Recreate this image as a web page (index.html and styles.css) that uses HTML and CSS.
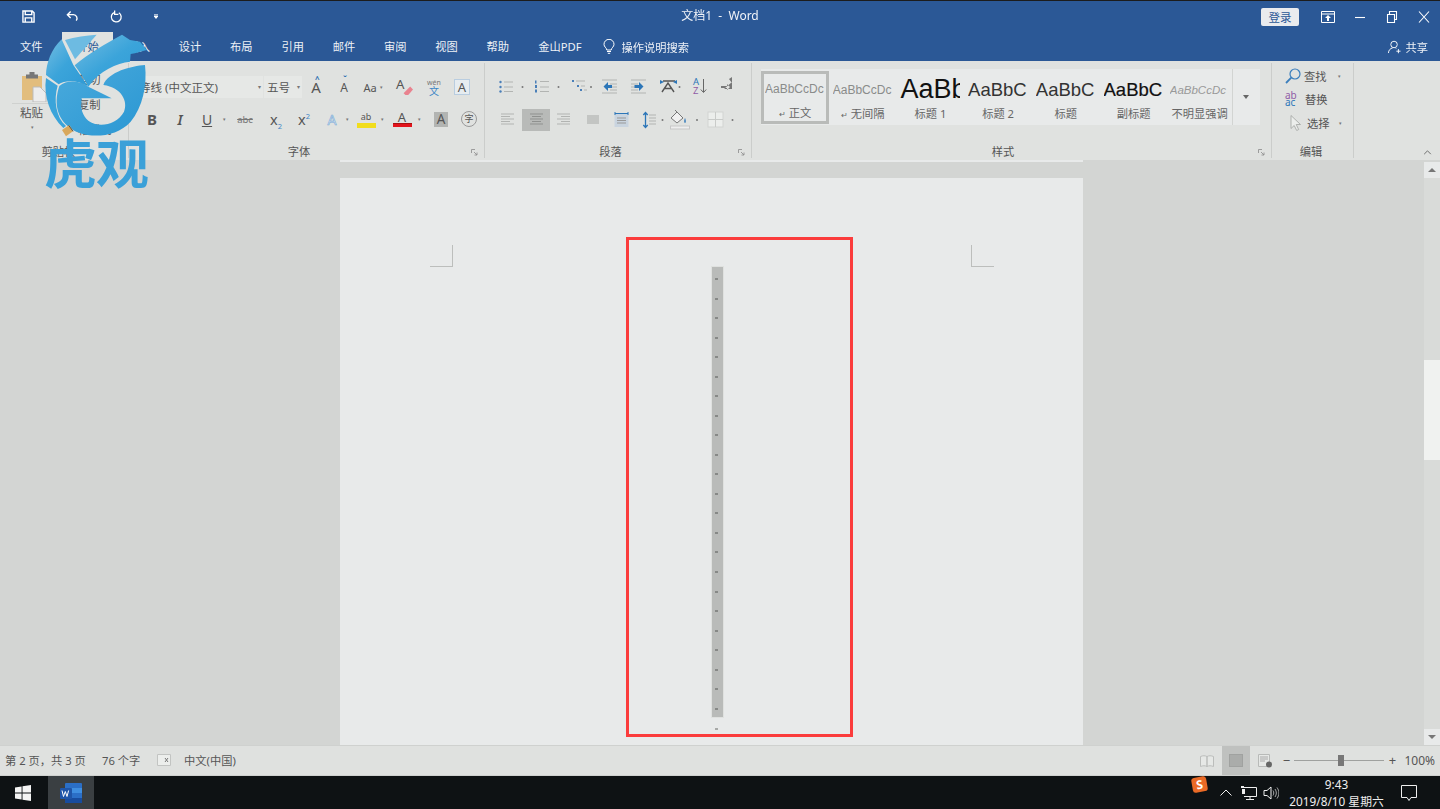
FILE: index.html
```html
<!DOCTYPE html>
<html lang="zh-CN">
<head>
<meta charset="utf-8">
<title>文档1 - Word</title>
<link rel="stylesheet" href="styles.css">
</head>
<body>
<div class="app">
  <div class="topline"></div>
  <header class="titlebar">
    <div class="qat">
      <svg class="qat-icon" viewBox="0 0 14 14"><path d="M1 1h10l2 2v10H1z M3.500 1v4h7V1 M3.500 13V8.500h7V13" fill="none" stroke="#fff" stroke-width="1.500"/></svg>
      <svg class="qat-icon" viewBox="0 0 14 14"><path d="M5 1.500 1.500 5 5 8.500M2 5h6a4 4 0 0 1 3 6.500" fill="none" stroke="#fff" stroke-width="1.500"/></svg>
      <svg class="qat-icon" viewBox="0 0 14 14"><path d="M9.500 3A5.300 5.300 0 1 1 5 2.500M5 .5v4.300h4" fill="none" stroke="#fff" stroke-width="1.400"/></svg>
      <svg class="qat-more" viewBox="0 0 6 6"><path d="M1 1.500h4v1L3 5 1 2.500z" fill="#fff"/><path d="M1 0h4v.6H1z" fill="#fff"/></svg>
    </div>
    <div class="doc-title">文档1&nbsp; - &nbsp;Word</div>
    <div class="win">
      <button class="login">登录</button>
      <svg class="win-btn" viewBox="0 0 14 12"><path d="M.5.500h13v11H.500z M.5 3h13" fill="none" stroke="#fff"/><path d="M7 4 4 7h2v3h2V7h2z" fill="#fff"/></svg>
      <svg class="win-btn" viewBox="0 0 14 12"><path d="M2 6.500h10" stroke="#fff" stroke-width="1.100"/></svg>
      <svg class="win-btn" viewBox="0 0 14 12"><path d="M2.500 3.500h7v8h-7zM4.500 3.500v-3h7v8h-2" fill="none" stroke="#fff" stroke-width="1.100"/></svg>
      <svg class="win-btn" viewBox="0 0 14 12"><path d="M2 .5 12 11.500M12 .5 2 11.500" stroke="#fff" stroke-width="1.100"/></svg>
    </div>
  </header>
  <nav class="tabs">
    <span class="tab file">文件</span>
    <span class="tab active">开始</span>
    <span class="tab">插入</span>
    <span class="tab">设计</span>
    <span class="tab">布局</span>
    <span class="tab">引用</span>
    <span class="tab">邮件</span>
    <span class="tab">审阅</span>
    <span class="tab">视图</span>
    <span class="tab">帮助</span>
    <span class="tab pdf">金山PDF</span>
    <svg class="bulb" viewBox="0 0 12 15"><path d="M3.800 11C3.500 8.500 1 8 1 5.300a5 5 0 0 1 10 0C11 8 8.500 8.500 8.200 11zM4 12.500h4M4.800 14.300h2.400" fill="none" stroke="#fff"/></svg>
    <span class="search">操作说明搜索</span>
    <span class="share">
      <svg class="share-icon" viewBox="0 0 14 14"><circle cx="6.500" cy="4.300" r="3.500" fill="none" stroke="#fff"/><path d="M.5 13.500c0-3 2-5 4.500-5.500M8 8l1 .5M9 11.500h4.500M11.200 9.200v4.500" fill="none" stroke="#fff"/></svg>
      共享
    </span>
  </nav>

  <section class="ribbon">
    <div class="group clip">
      <div class="content clip-content">
        <div class="paste">
          <svg class="paste-icon" viewBox="0 0 26 30"><rect x="1" y="4" width="20" height="24" fill="#e2bd7d"/><rect x="5" y="2.500" width="12" height="4" fill="#777"/><rect x="8.500" y="0" width="5" height="4" fill="#777"/><path d="M12 15h7l6 6v9H12z" fill="#ececec" stroke="#bbb"/></svg>
          <span class="paste-label">粘贴</span>
          <span class="dot">▾</span>
        </div>
        <div class="clip-list">
          <span>剪切</span>
          <span>复制</span>
          <span>格式刷</span>
        </div>
      </div>
      <div class="label">剪贴板</div>
    </div>

    <div class="group font">
      <div class="content rows">
        <div class="row">
          <div class="combo name"><span>等线 (中文正文)</span><span class="dot-in">▾</span></div>
          <div class="combo size"><span>五号</span><span class="dot-in">▾</span></div>
          <span class="tool w28 big">A<sup class="blue">^</sup></span>
          <span class="tool w28 small-a">A<sup class="blue">ˇ</sup></span>
          <span class="tool w30 aa">Aa <em>▾</em></span>
          <span class="tool w32">
            <svg class="ic-eraser" viewBox="0 0 18 18"><text x="0" y="11" class="svg-a">A</text><path d="M8 15 15 8l3 3-5 6H10z" fill="#e9838f"/></svg>
          </span>
          <span class="tool w28 wen"><small>wén</small><b>文</b></span>
          <span class="tool w28"><span class="boxed-a">A</span></span>
        </div>
        <div class="row">
          <span class="tool w9"></span>
          <span class="tool w28 bold">B</span>
          <span class="tool w28 ital">I</span>
          <span class="tool w26 under">U</span>
          <span class="dot">▾</span>
          <span class="tool w34 strike">abc</span>
          <span class="tool w28 sub"><span>x<sub>2</sub></span></span>
          <span class="tool w28 sub"><span>x<sup>2</sup></span></span>
          <span class="tool w28 outline">A</span>
          <span class="dot tuck">▾</span>
          <span class="tool w30 hl"><span>ab</span><i></i></span>
          <span class="dot tuck">▾</span>
          <span class="tool w32 red"><span>A</span><i></i></span>
          <span class="dot tuck">▾</span>
          <span class="tool w36"><span class="shaded">A</span></span>
          <span class="tool w20"><span class="circled">字</span></span>
        </div>
      </div>
      <div class="label">字体</div>
      <svg class="launcher" viewBox="0 0 7 7"><path d="M.5 4V.5H4M3 3l3 3M6 3.500V6H3.500" fill="none" stroke="#8a8a8a" stroke-width=".8"/></svg>
    </div>

    <div class="group para">
      <div class="content rows">
        <svg class="strip" viewBox="486 76 266 22">
          <g fill="#4a7fb8"><circle cx="501.500" cy="82" r="1.200"/><circle cx="501.500" cy="87" r="1.200"/><circle cx="501.500" cy="91.500" r="1.200"/><path d="M536 80.500h1.500v3H536zM536 85h2v3h-2zM536 89.500h2v3h-2z"/><path d="M573 80h2v2h-2zM578 85h2v2h-2zM581 89h2v2h-2z"/></g>
          <g stroke="#b2b4b2" fill="none"><path d="M505 82h9M505 87h9M505 91.500h9M541 81.500h9M541 87h9M541 91.500h9M577 81h9M582 86h4M585 90h3"/></g>
          <g fill="#777"><circle cx="523.500" cy="87" r="1"/><circle cx="559.500" cy="87" r="1"/><circle cx="592" cy="87" r="1"/><circle cx="680.500" cy="87" r="1"/></g>
          <path d="M603 80h15M611 84h7M611 87h7M611 90h7M603 93h15M632 80h15M632 84h7M632 87h7M632 90h7M632 93h15" stroke="#b2b4b2" fill="none"/>
          <path d="M609 82l-4.500 4.500 4.500 4.500v-3h4v-3h-4zM640 82l4.500 4.500-4.500 4.500v-3h-4.500v-3h4.500z" fill="#2c76b8"/>
          <path d="M664 81h12M663 92l6-9 6 9M665.500 88.500h7" stroke="#555" stroke-width="1.400" fill="none"/><path d="M661 80l4 2-4 2zM678 80l-4 2 4 2z" fill="#2c76b8"/>
          <text x="694" y="84.500" class="az-a">A</text><text x="694" y="93.800" class="az-z">Z</text><path d="M704.500 79v13M701.800 89.500l2.700 3 2.700-3" fill="none" stroke="#666"/>
          <path d="M725 89h8v-7M730 79l3-2v6z M733 78h1M722 86h6v-2l3 3-3 3v-2h-6z" fill="#777"/>
        </svg>
        <svg class="strip" viewBox="486 109 266 22">
          <rect x="523" y="109" width="28" height="22" fill="#b8bab8"/>
          <g stroke="#b2b4b2" fill="none"><path d="M502 114h13M502 116.500h9M502 119h13M502 121.500h9M502 124h13"/><path d="M558 114h13M562 116.500h9M558 119h13M562 121.500h9M558 124h13"/></g>
          <path d="M531 114h13M533 116.500h9M531 119h13M533 121.500h9M531 124h13" stroke="#8f918f" fill="none"/>
          <rect x="588" y="115" width="12" height="9" fill="#c3c5c3"/>
          <rect x="615.500" y="113" width="14" height="14" fill="#c9d4df"/><path d="M618 118h9M618 120.500h9M618 123h9" stroke="#999"/><path d="M616 113.500h13M616 112v3M629 112v3" stroke="#2c76b8" fill="none"/>
          <path d="M646.500 113v14M644.300 115l2.200-2.500 2.200 2.500M644.300 125l2.200 2.500 2.200-2.500" stroke="#2c76b8" stroke-width="1.300" fill="none"/><path d="M650 115h7M650 118h7M650 121h7M650 124h7" stroke="#b2b4b2"/>
          <circle cx="663.500" cy="120" r="1" fill="#777"/>
          <path d="M672 118l6-6 6 6-6 5zM678 112l-2-2" fill="#f1f1f1" stroke="#777"/><path d="M686 118c1 2 1 5 0 5s-1-3 0-5z" fill="#2c76b8"/><rect x="671.500" y="126" width="19" height="3" fill="#eeeeee" stroke="#c7c7c7"/>
          <circle cx="698" cy="120" r="1" fill="#777"/>
          <rect x="709" y="112" width="15" height="15" fill="#eceeec" stroke="#d2d4d2"/><path d="M716.500 112v15M709 119.500h15" stroke="#c9cbc9"/>
          <circle cx="733.500" cy="120" r="1" fill="#777"/>
        </svg>
      </div>
      <div class="label">段落</div>
      <svg class="launcher" viewBox="0 0 7 7"><path d="M.5 4V.5H4M3 3l3 3M6 3.500V6H3.500" fill="none" stroke="#8a8a8a" stroke-width=".8"/></svg>
    </div>

    <div class="group styles">
      <div class="content gallery-wrap">
        <div class="gallery">
          <div class="style selected"><span class="pv thin">AaBbCcDc</span><span class="nm"><i>↵</i> 正文</span></div>
          <div class="style"><span class="pv thin">AaBbCcDc</span><span class="nm"><i>↵</i> 无间隔</span></div>
          <div class="style"><span class="pv h1">AaBb</span><span class="nm">标题 1</span></div>
          <div class="style"><span class="pv h2">AaBbC</span><span class="nm">标题 2</span></div>
          <div class="style"><span class="pv h2">AaBbC</span><span class="nm">标题</span></div>
          <div class="style"><span class="pv h3">AaBbC</span><span class="nm">副标题</span></div>
          <div class="style last"><span class="pv em">AaBbCcDc</span><span class="nm">不明显强调</span></div>
          <div class="more"><span></span></div>
        </div>
      </div>
      <div class="label">样式</div>
      <svg class="launcher" viewBox="0 0 7 7"><path d="M.5 4V.5H4M3 3l3 3M6 3.500V6H3.500" fill="none" stroke="#8a8a8a" stroke-width=".8"/></svg>
    </div>

    <div class="group edit">
      <div class="content edit-list">
        <div class="edit-item">
          <svg class="ic16" viewBox="0 0 16 16"><circle cx="10" cy="6" r="5" fill="none" stroke="#3b7fbd" stroke-width="1.200"/><path d="M6.300 9.700 1 15" stroke="#3b7fbd" stroke-width="1.800"/></svg>
          <span>查找</span><span class="dot-e first">▾</span>
        </div>
        <div class="edit-item">
          <span class="abac"><b>ab</b><u>ac</u></span>
          <span>替换</span>
        </div>
        <div class="edit-item sel">
          <svg class="ic16" viewBox="0 0 16 16"><path d="M3 .5v13l3.200-3 2.500 5 2-1-2.500-5h4.300z" fill="#eceeec" stroke="#a8aaa8" stroke-width=".9"/></svg>
          <span>选择</span><span class="dot-e">▾</span>
        </div>
      </div>
      <div class="label">编辑</div>
    </div>
    <div class="collapse">
      <svg viewBox="0 0 10 6"><path d="M1 5l4-4 4 4" fill="none" stroke="#666" stroke-width="1.100"/></svg>
    </div>
  </section>

  <main class="workspace">
    <div class="doc">
      <div class="prev-page"></div>
      <article class="page">
        <div class="crop left"></div>
        <div class="crop right"></div>
        <div class="selection">
          <div class="bar">
            <i></i><i></i><i></i><i></i><i></i><i></i><i></i><i></i><i></i><i></i><i></i><i></i><i></i><i></i><i></i><i></i><i></i><i></i><i></i><i></i><i></i><i></i><i></i>
          </div>
          <i class="last-mark"></i>
        </div>
      </article>
    </div>
    <aside class="scrollbar">
      <div class="sb-btn"><span class="up"></span></div>
      <div class="sb-track"><div class="sb-thumb"></div></div>
      <div class="sb-btn"><span class="down"></span></div>
    </aside>
  </main>

  <footer class="status">
    <span class="st-a">第 2 页，共 3 页</span>
    <span class="st-b">76 个字</span>
    <svg class="st-ic" viewBox="0 0 14 12"><path d="M.5 .5h13v11H.500z" fill="#eceeec" stroke="#c2c4c2"/><path d="M8 4l3 4M11 4 8 8" stroke="#777"/></svg>
    <span class="st-c">中文(中国)</span>
    <div class="st-right">
      <svg class="view" viewBox="0 0 14 12"><path d="M.5 1.500C3 .5 5 .5 7 1.500v10C5 10.500 3 10.500.5 11.500zM13.500 1.500C11 .5 9 .5 7 1.500v10c2-1 4-1 6.500 0z" fill="#e6e8e6" stroke="#bbbdbb"/></svg>
      <div class="view-on"><span></span></div>
      <svg class="view web" viewBox="0 0 14 14"><path d="M.5 .5h11v12H.500z" fill="#e6e8e6" stroke="#b8bab8"/><path d="M2 3h8M2 5h8M2 7h5" stroke="#aaa"/><circle cx="11" cy="10.500" r="3" fill="#666"/></svg>
      <span class="zm minus">−</span>
      <div class="slider"><span></span></div>
      <span class="zm plus">+</span>
      <span class="pct">100%</span>
    </div>
  </footer>

  <div class="taskbar">
    <svg class="start" viewBox="0 0 16 16"><path d="M0 2.400 6.600 1.400V7.500H0zM7.500 1.300 16 0V7.500H7.500zM0 8.400H6.600V14.600L0 13.600zM7.500 8.400H16V16L7.500 14.700z" fill="#f4f4f4"/></svg>
    <div class="task-word">
      <svg viewBox="0 0 22 20"><rect x="5" y="0" width="17" height="20" rx="1" fill="#2b6fc7"/><rect x="5" y="5" width="17" height="5" fill="#3f8ee0"/><rect x="5" y="15" width="17" height="5" fill="#184c9e"/><rect x="0" y="5" width="12" height="11" rx="1" fill="#1f55a8"/><path d="M2 7.500l1.500 6 1.800-5 1.700 5 1.600-6" fill="none" stroke="#fff" stroke-width="1"/></svg>
    </div>
    <div class="tray">
      <span class="sogou">S</span>
      <svg class="t-chev" viewBox="0 0 12 7"><path d="M.5 6.500 6 1l5.500 5.500" fill="none" stroke="#eee" stroke-width="1"/></svg>
      <svg class="t-net" viewBox="0 0 16 14"><path d="M3 1.500h12.500v9H3M9 10.500V13M5 13.500h8" fill="none" stroke="#eee"/><path d="M0 0h3v2H0zM1 3h3v5H1z" fill="#eee"/></svg>
      <svg class="t-vol" viewBox="0 0 16 14"><path d="M1 4.500h3L8 1v12L4 9.500H1z" fill="none" stroke="#eee"/><path d="M10 4.500c1 1.500 1 3.500 0 5M12 3c1.800 2.500 1.800 5.500 0 8M14 1.500c2.500 3.500 2.500 7.500 0 11" fill="none" stroke="#ccc" stroke-width=".8"/></svg>
      <div class="clock"><span>9:43</span><span>2019/8/10 星期六</span></div>
      <svg class="t-note" viewBox="0 0 16 16"><path d="M.5 .5h15v12H10l-2 3-2-3H.500z" fill="none" stroke="#eee"/></svg>
    </div>
  </div>

  <div class="logo">
    <svg class="logo-mark" viewBox="0 0 510 510">
      <defs>
        <linearGradient id="lg" x1="0" y1="0" x2="1" y2="1"><stop offset="0" stop-color="#74bde2"/><stop offset=".5" stop-color="#3ba4da"/><stop offset="1" stop-color="#2f9ad5"/></linearGradient>
        <linearGradient id="lr" x1="0" y1="0" x2="1" y2="1"><stop offset="0" stop-color="#4aaadc"/><stop offset="1" stop-color="#2a97d3"/></linearGradient>
      </defs>
      <path d="M195 30C225 20 260 16 290 14L225 88Z" fill="#6dbbe2"/>
      <path d="M185 28C155 55 138 100 138 135L176 163C195 150 235 150 265 170L220 105Z" fill="url(#lg)"/>
      <path d="M224 106C265 70 320 40 366 14L390 30 420 35 440 60 405 70 392 72 390 95C350 100 300 120 265 170 255 150 240 128 224 106Z" fill="url(#lg)"/>
      <path d="M138 144 173 167C160 210 168 262 198 288L190 294C150 255 130 200 138 144Z" fill="#3ba4da"/>
      <path d="M178 168C163 212 168 258 203 288 240 325 340 332 392 275 428 232 442 165 435 105 395 108 325 125 310 165 365 172 385 215 372 245 350 285 295 295 265 272 248 258 240 235 245 205L335 205 265 170C235 150 200 150 178 168Z" fill="url(#lr)"/>
      <path d="M186 300l22-15 12 18-22 16z" fill="#d9a85c"/>
      <path d="M206 286l13 18" stroke="#555" stroke-width="3"/>
    </svg>
    <span class="logo-text">虎观</span>
  </div>
</div>
</body>
</html>
```
FILE: styles.css
```css
* { box-sizing: border-box; }
html, body { margin: 0; height: 100%; overflow: hidden; }
body { background: #d3d5d3; font-family: "Noto Sans", "Noto Sans CJK SC", sans-serif; color: #555; }
.app { position: relative; width: 1440px; height: 809px; display: flex; flex-direction: column; overflow: hidden; filter: blur(.35px); }
svg { display: block; flex: none; }

.topline { height: 1px; background: #1c1c1c; flex: none; }
.titlebar { height: 31px; background: #2b5896; display: flex; align-items: center; position: relative; flex: none; color: #fff; }
.qat { display: flex; align-items: center; padding-left: 22px; }
.qat-icon { width: 13px; height: 13px; margin-right: 31px; }
.qat-more { width: 6px; height: 6px; margin-left: -1px; }
.doc-title { position: absolute; left: 0; right: 0; text-align: center; font-size: 12px; top: 5px; color: #f0f3f8; }
.win { margin-left: auto; display: flex; align-items: center; padding-right: 9px; }
.login { width: 38px; height: 18px; padding: 0; border: 0; border-radius: 2px; background: #e9ebee; color: #2b5896; font: 11.500px "Noto Sans CJK SC", sans-serif; margin-right: 22px; }
.win-btn { width: 14px; height: 12px; margin-left: 18px; }
.win-btn:first-of-type { margin-left: 0; }

.tabs { height: 29px; background: #2b5896; display: flex; align-items: center; padding-left: 5.500px; font-size: 11.250px; color: #eef2f7; flex: none; position: relative; }
.tab { width: 51.300px; text-align: center; flex: none; line-height: 29px; }
.tab.file { margin-right: 5px; }
.tab.active { background: #e0e2e0; color: #2b5896; }
.tab.pdf { width: 73px; }
.bulb { width: 12px; height: 15px; margin-left: 7px; }
.search { margin-left: 6px; }
.share { margin-left: auto; padding-right: 12px; display: flex; align-items: center; gap: 4px; }
.share-icon { width: 13px; height: 14px; }

.ribbon { height: 99px; background: #e0e2e0; display: flex; flex: none; position: relative; }
.group { position: relative; display: flex; flex-direction: column; flex: none; }
.group::after { content: ""; position: absolute; right: 0; top: 2px; bottom: 2px; width: 1px; background: #cbcdcb; }
.clip { width: 129px; }
.font { width: 356px; }
.para { width: 267px; }
.styles { width: 520px; }
.edit { width: 82px; }
.content { flex: 1; min-height: 0; }
.label { height: 17px; line-height: 18px; text-align: center; font-size: 11.250px; color: #555; }
.clip .label { padding-right: 12px; }
.font .label { padding-right: 16px; }
.para .label { padding-right: 16px; }
.styles .label { padding-right: 18px; }
.edit .label { padding-right: 4px; }
.launcher { position: absolute; right: 7px; bottom: 4px; width: 7px; height: 7px; }

.clip-content { display: flex; padding: 11px 0 0 12px; }
.paste { width: 42px; display: flex; flex-direction: column; align-items: flex-start; position: relative; }
.paste-icon { width: 26px; height: 30px; margin-left: 9px; }
.paste::after { content: ""; position: absolute; left: 0; top: 31px; width: 42px; height: 1px; background: #cfd1cf; }
.paste-label { font-size: 11.500px; margin: 3px 0 0 8px; line-height: 16px; }
.clip-list { display: flex; flex-direction: column; gap: 9px; padding: 0 0 0 24px; font-size: 11.250px; line-height: 16px; }
.paste .dot { margin-left: 16px; line-height: 12px; }

.rows { display: flex; flex-direction: column; gap: 11px; padding-top: 15px; }
.font .rows { gap: 10px; }
.row { display: flex; height: 22px; align-items: center; }
.combo { height: 22px; background: #e6e8e6; display: flex; align-items: center; justify-content: space-between; font-size: 11.500px; padding: 0 2px; color: #555; margin-right: 1px; }
.combo.name { width: 134px; padding-left: 10px; }
.combo.size { width: 38px; padding-left: 3px; margin-right: 0; }
.dot-in { font-size: 6px; color: #777; }
.tool { display: flex; align-items: center; justify-content: center; flex: none; height: 22px; position: relative; color: #555; font-size: 14px; }
.w9 { width: 9px; } .w20 { width: 20px; } .w26 { width: 26px; } .w28 { width: 28px; } .w30 { width: 30px; } .w32 { width: 32px; } .w34 { width: 34px; } .w36 { width: 36px; }
.dot { width: 8px; flex: none; text-align: center; font-size: 5px; color: #777; line-height: 22px; }
.dot.tuck { margin-left: -3px; }
.big { font-size: 15px; }
.small-a { font-size: 12px; }
.blue { position: absolute; top: -3px; left: 13px; font-size: 8px; color: #2b6fb0; font-weight: 700; }
.aa { font-size: 11px; gap: 3px; }
.aa em { font-size: 5px; font-style: normal; color: #777; }
.ic-eraser { width: 17px; height: 17px; overflow: visible; }
.svg-a { font: 14px "Noto Sans", sans-serif; fill: #555; }
.wen { flex-direction: column; line-height: 8px; }
.wen small { font-size: 7px; color: #777; }
.wen b { font-size: 10px; font-weight: 400; color: #3d86c6; }
.boxed-a { width: 16px; height: 16px; border: 1px solid #b9cde0; background: #e6ecf0; font-size: 13px; line-height: 14px; text-align: center; }
.bold { font-weight: 700; font-size: 15px; }
.ital { font-style: italic; font-weight: 600; font-size: 14px; }
.under { text-decoration: underline; font-size: 14px; }
.strike { font-size: 9.500px; text-decoration: line-through; color: #777; }
.sub { font-size: 14.500px; }
.sub sub, .sub sup { font-size: 7.500px; color: #3d86c6; line-height: 0; }
.outline { color: #d8e6f2; font-size: 14px; -webkit-text-stroke: .6px #7aaad6; }
.hl, .red { flex-direction: column; line-height: 12px; font-size: 12px; }
.hl { font-size: 9px; }
.hl i { width: 19px; height: 5px; background: #f1dd1d; display: block; }
.red { font-size: 13px; }
.red i { width: 19px; height: 4px; background: #e2141c; display: block; border-top: 1px solid #a11; }
.shaded { width: 14px; height: 15px; background: #b2b4b2; text-align: center; line-height: 14px; font-size: 13.500px; }
.circled { width: 16px; height: 16px; border: 1px solid #999; border-radius: 50%; font-size: 9px; line-height: 14px; text-align: center; }
.strip { width: 266px; height: 22px; }
.az-a, .az-z { font: 9.500px "Noto Sans", sans-serif; }
.az-a { fill: #2c76b8; }
.az-z { fill: #8f5ba6; }

.gallery-wrap { padding: 8px 0 0 9px; }
.gallery { width: 499px; height: 56px; background: #e8eaea; display: flex; }
.style { width: 68px; height: 56px; flex: none; display: flex; flex-direction: column; align-items: center; padding: 0 2px; overflow: hidden; font-family: "Liberation Sans", sans-serif; margin-left: -.300px; }
.style.selected { border: 3px solid #b9bbb9; margin: 2px 0 0; height: 53px; padding: 0; }
.style.last { width: 65px; }
.pv { height: 37.500px; display: block; line-height: 42px; white-space: nowrap; color: #333; width: 60px; overflow: hidden; }
.selected .pv { line-height: 30px; height: 31.500px; }
.pv.thin { font-size: 12px; color: #8a8c8a; }
.pv.h1 { font-size: 27px; color: #111; line-height: 41px; }
.pv.h2 { font-size: 18.500px; font-weight: 400; color: #333; }
.pv.h3 { font-size: 18.500px; color: #111; -webkit-text-stroke: .2px #111; }
.pv.em { font-size: 11.500px; font-style: italic; color: #999; }
.nm { font-size: 11.250px; line-height: 13px; color: #666; font-family: "Noto Sans", "Noto Sans CJK SC", sans-serif; white-space: nowrap; }
.nm i { font-style: normal; font-size: 8px; }
.more { width: 26px; border-left: 1px solid #d2d4d2; display: flex; align-items: center; justify-content: center; }
.more span { border: 3.500px solid transparent; border-top: 4px solid #666; border-bottom: 0; }

.edit-list { display: flex; flex-direction: column; padding: 3px 0 0 13px; font-size: 11.250px; }
.edit-item { display: flex; align-items: center; height: 23.500px; gap: 3px; }
.ic16 { width: 16px; height: 16px; }
.dot-e { font-size: 5px; color: #777; margin-left: 6px; }
.dot-e.first { margin-left: 8px; }
.abac { width: 17px; display: flex; flex-direction: column; font-size: 10px; line-height: 7px; font-family: "Noto Sans", sans-serif; }
.abac b { font-weight: 400; color: #8f5ba6; }
.abac u { text-decoration: none; color: #2c76b8; }
.sel .ic16 { margin-left: 3px; }
.collapse { margin-left: auto; align-self: flex-end; padding: 0 8px 5px 0; }
.collapse svg { width: 9px; height: 5px; }

.workspace { height: 585px; background: #d3d5d3; display: flex; flex: none; overflow: hidden; }
.doc { flex: 1; min-width: 0; display: flex; flex-direction: column; align-items: center; padding-right: 1px; }
.prev-page { width: 743px; height: 2px; background: #e8eaea; flex: none; }
.page { width: 743px; height: 600px; background: #e8eaea; margin-top: 16px; position: relative; flex: none; padding: 59px 0 0 286px; }
.crop { position: absolute; top: 67px; width: 23px; height: 22px; border-bottom: 1px solid #bcbebc; }
.crop.left { left: 90px; border-right: 1px solid #bcbebc; }
.crop.right { left: 631px; border-left: 1px solid #bcbebc; }
.selection { width: 227px; height: 500px; border: 3px solid #fb3c3c; padding: 27px 0 0 83px; position: relative; }
.bar { width: 11px; height: 450px; background: #b9bbb9; display: flex; flex-direction: column; justify-content: space-between; padding: 11px 0 7px 3px; box-shadow: 0 0 0 1px #dfe1df; }
.bar i { width: 3px; height: 2px; background: #878987; display: block; }
.last-mark { position: absolute; left: 86px; top: 488px; width: 3px; height: 2px; background: #a8aaa8; }

.scrollbar { width: 16px; background: #d3d5d3; display: flex; flex-direction: column; flex: none; padding-top: 2px; }
.sb-btn { height: 16px; background: #e8eaea; display: flex; align-items: center; justify-content: center; flex: none; }
.sb-btn .up { border: 4px solid transparent; border-bottom: 4px solid #777; border-top: 0; }
.sb-btn .down { border: 4px solid transparent; border-top: 4px solid #777; border-bottom: 0; }
.sb-track { flex: 1; background: #d9dbd9; padding-top: 182px; }
.sb-thumb { height: 100px; background: #f0f2f0; }

.status { height: 31px; background: #dfe1df; border-top: 1px solid #cfd1cf; border-bottom: 1px solid #cfd1cf; display: flex; align-items: center; font-size: 11.250px; color: #555; flex: none; padding: 0 0 2px 5px; }
.st-a { width: 97px; }
.st-b { width: 55px; }
.st-ic { width: 14px; height: 12px; margin-right: 13px; }
.st-right { margin-left: auto; display: flex; align-items: center; height: calc(100% + 2px); margin-bottom: -2px; padding-right: 5px; }
.view { width: 14px; height: 12px; }
.view-on { width: 28px; height: 100%; background: #bfc1bf; margin: 0 8px; display: flex; align-items: center; justify-content: center; }
.view-on span { width: 14px; height: 13px; background: #aaacaa; border: 1px solid #a0a2a0; }
.web { height: 14px; }
.zm { width: 10px; text-align: center; font-size: 13px; line-height: 1; }
.minus { margin: 0 3px 0 9px; }
.plus { margin: 0 7px 0 3px; }
.slider { width: 90px; height: 1px; background: #9fa19f; position: relative; }
.slider span { position: absolute; left: 44px; top: -5px; width: 6px; height: 11px; background: #777; }
.pct { font-size: 12px; }

.taskbar { flex: 1; background: #0e1214; display: flex; align-items: center; position: relative; }
.start { width: 16px; height: 16px; margin-left: 15px; }
.task-word { width: 46px; height: 100%; margin-left: 17px; background: #3a3f42; display: flex; align-items: center; justify-content: center; }
.task-word svg { width: 22px; height: 20px; }
.tray { margin-left: auto; display: flex; align-items: center; height: 100%; color: #eee; font-size: 11.800px; padding-right: 23px; }
.sogou { width: 15px; height: 15px; background: #ea6a26; color: #fff; font: 700 12px/15px "Noto Sans", sans-serif; text-align: center; border-radius: 3px; transform: rotate(-10deg); margin-top: -16px; }
.t-chev { width: 12px; height: 7px; margin-left: 13px; }
.t-net { width: 16px; height: 14px; margin-left: 9px; }
.t-vol { width: 16px; height: 14px; margin-left: 6px; }
.clock { width: 100px; margin-left: 8px; display: flex; flex-direction: column; align-items: center; line-height: 16.500px; }
.t-note { width: 16px; height: 16px; margin-left: 14.500px; }

.logo { position: absolute; left: 0; top: 30px; width: 170px; height: 170px; }
.logo-mark { width: 170px; height: 170px; position: absolute; left: 0; top: 0; }
.logo-text { position: absolute; left: 44px; top: 98px; font: 700 53px/66px "Noto Sans CJK SC", sans-serif; color: #3aa0d8; white-space: nowrap; letter-spacing: -1px; }
```
